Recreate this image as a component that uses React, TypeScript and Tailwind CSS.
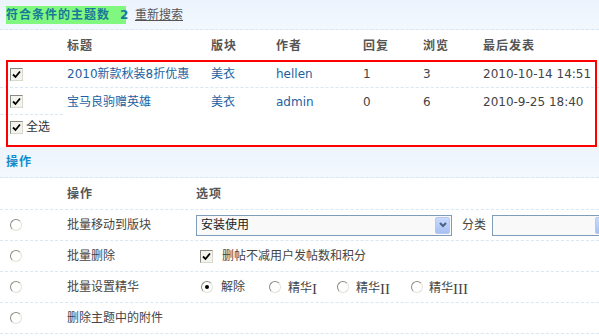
import React from 'react';

const font = "font-['DejaVu_Sans','Noto_Sans_CJK_SC',sans-serif]";
const dash = 'border-b border-dashed border-[#d9e7f3]';

const CheckBox: React.FC = () => (
  <span className="inline-flex w-[13px] h-[13px] items-center justify-center border border-t-[#8a8a80] border-l-[#8a8a80] border-r-[#d8d8cc] border-b-[#d8d8cc] bg-[#f4f4ee] shrink-0">
    <svg width="9" height="9" viewBox="0 0 9 9">
      <path d="M1 4.5 L3.5 7 L8 1.5" fill="none" stroke="#000" strokeWidth="1.8" />
    </svg>
  </span>
);

const Radio: React.FC<{ on?: boolean }> = ({ on }) => (
  <span className="relative inline-flex w-[12px] h-[12px] items-center justify-center rounded-full border border-t-[#8c8c80] border-l-[#8c8c80] border-r-[#e2e2d8] border-b-[#e2e2d8] bg-white shrink-0">
    {on && <span className="w-[4px] h-[4px] rounded-full bg-black" />}
  </span>
);

const Select: React.FC<{ w: string; text?: string }> = ({ w, text }) => (
  <div className={`${w} h-[21px] flex items-center border border-[#7f9db9] bg-[#f9f9f9] shrink-0`}>
    <span className="flex-1 pl-[4px] text-[12px] text-[#222]">{text}</span>
    <span className="w-[15px] h-[17px] mr-[1px] rounded-[2px] bg-gradient-to-b from-[#c8daff] to-[#a7c0f2] border border-[#b4c8f0] flex items-center justify-center">
      <svg width="8" height="6" viewBox="0 0 8 6">
        <path d="M1 1 L4 4 L7 1" fill="none" stroke="#4d6185" strokeWidth="2" />
      </svg>
    </span>
  </div>
);

const Roman: React.FC<{ n: string }> = ({ n }) => (
  <span className="font-['Liberation_Serif',serif] text-[15px] relative top-[2px]">{n}</span>
);

const rows = [
  { title: '2010新款秋装8折优惠', board: '美衣', author: 'hellen', reply: '1', view: '3', last: '2010-10-14 14:51' },
  { title: '宝马良驹赠英雄', board: '美衣', author: 'admin', reply: '0', view: '6', last: '2010-9-25 18:40' },
];

export default function App() {
  return (
    <div className={`relative w-[599px] h-[336px] overflow-hidden bg-white text-[12px] text-[#444] ${font}`}>
      <div className={`h-[30px] ${dash} bg-gradient-to-b from-[#ebf3fc] to-[#f3f8fe] flex items-center pl-[6px]`}>
        <span className="h-[18px] w-[120px] shrink-0 bg-[#80f880] flex items-center font-bold tracking-[1px] text-[#167a98] whitespace-nowrap">
          <span>符合条件的主题数</span>
          <span className="ml-[10px]">2</span>
        </span>
        <span className="ml-[9px] underline text-[#555]">重新搜索</span>
      </div>

      <div className="h-[31px] flex items-center font-bold tracking-[1px] text-[#555]">
        <span className="w-[67px] shrink-0" />
        <span className="w-[144px] shrink-0">标题</span>
        <span className="w-[65px] shrink-0">版块</span>
        <span className="w-[87px] shrink-0">作者</span>
        <span className="w-[60px] shrink-0">回复</span>
        <span className="w-[60px] shrink-0">浏览</span>
        <span className="whitespace-nowrap">最后发表</span>
      </div>

      {rows.map((r, i) => (
        <div key={i} className={`h-[27px] flex items-center ${i === 0 ? dash : ''}`}>
          <span className={`w-[63px] mr-[4px] shrink-0 h-full flex items-center pl-[10px] ${i === 1 ? dash : ''}`}>
            <CheckBox />
          </span>
          <span className="w-[144px] shrink-0 text-[#1d5fa0] whitespace-nowrap">{r.title}</span>
          <span className="w-[65px] shrink-0 text-[#1d5fa0]">{r.board}</span>
          <span className="w-[87px] shrink-0 text-[#1d5fa0]">{r.author}</span>
          <span className="w-[60px] shrink-0">{r.reply}</span>
          <span className="w-[60px] shrink-0">{r.view}</span>
          <span className="whitespace-nowrap">{r.last}</span>
        </div>
      ))}
      <div className="h-[24px] flex items-center pl-[10px] gap-[3px] text-[#333]">
        <CheckBox />
        <span>全选</span>
      </div>
      <div className="h-[8px]" />

      <div className={`h-[31px] ${dash} bg-gradient-to-b from-[#edf4fc] to-[#f3f8fe] flex items-center pl-[6px] font-bold tracking-[1px] text-[#0f8ccc]`}>
        操作
      </div>

      <div className={`h-[32px] ${dash} flex items-center font-bold tracking-[1px] text-[#555]`}>
        <span className="w-[67px] shrink-0" />
        <span className="w-[129px] shrink-0">操作</span>
        <span>选项</span>
      </div>

      <div className={`h-[31px] ${dash} flex items-center text-[#444]`}>
        <span className="w-[67px] shrink-0 pl-[10px] flex"><Radio /></span>
        <span className="w-[129px] shrink-0">批量移动到版块</span>
        <Select w="w-[256px]" text="安装使用" />
        <span className="ml-[10px] w-[30px] shrink-0">分类</span>
        <Select w="w-[120px]" />
      </div>

      <div className={`h-[31px] ${dash} flex items-center text-[#444]`}>
        <span className="w-[67px] shrink-0 pl-[10px] flex"><Radio /></span>
        <span className="w-[133px] shrink-0">批量删除</span>
        <CheckBox />
        <span className="ml-[9px] whitespace-nowrap">删帖不减用户发帖数和积分</span>
      </div>

      <div className={`h-[31px] ${dash} flex items-center text-[#444]`}>
        <span className="w-[67px] shrink-0 pl-[10px] flex"><Radio /></span>
        <span className="w-[134px] shrink-0">批量设置精华</span>
        <span className="w-[68px] shrink-0 flex items-center gap-[8px]"><Radio on /><span>解除</span></span>
        <span className="w-[68px] shrink-0 flex items-center gap-[7px]"><Radio /><span>精华<Roman n="I" /></span></span>
        <span className="w-[74px] shrink-0 flex items-center gap-[7px]"><Radio /><span>精华<Roman n="II" /></span></span>
        <span className="shrink-0 flex items-center gap-[6px]"><Radio /><span>精华<Roman n="III" /></span></span>
      </div>

      <div className={`h-[31px] ${dash} flex items-center text-[#444]`}>
        <span className="w-[67px] shrink-0 pl-[10px] flex"><Radio /></span>
        <span>删除主题中的附件</span>
      </div>

      <div className="absolute left-[6px] top-[60px] w-[591px] h-[87px] border-2 border-[#ff0000] pointer-events-none" />
    </div>
  );
}
